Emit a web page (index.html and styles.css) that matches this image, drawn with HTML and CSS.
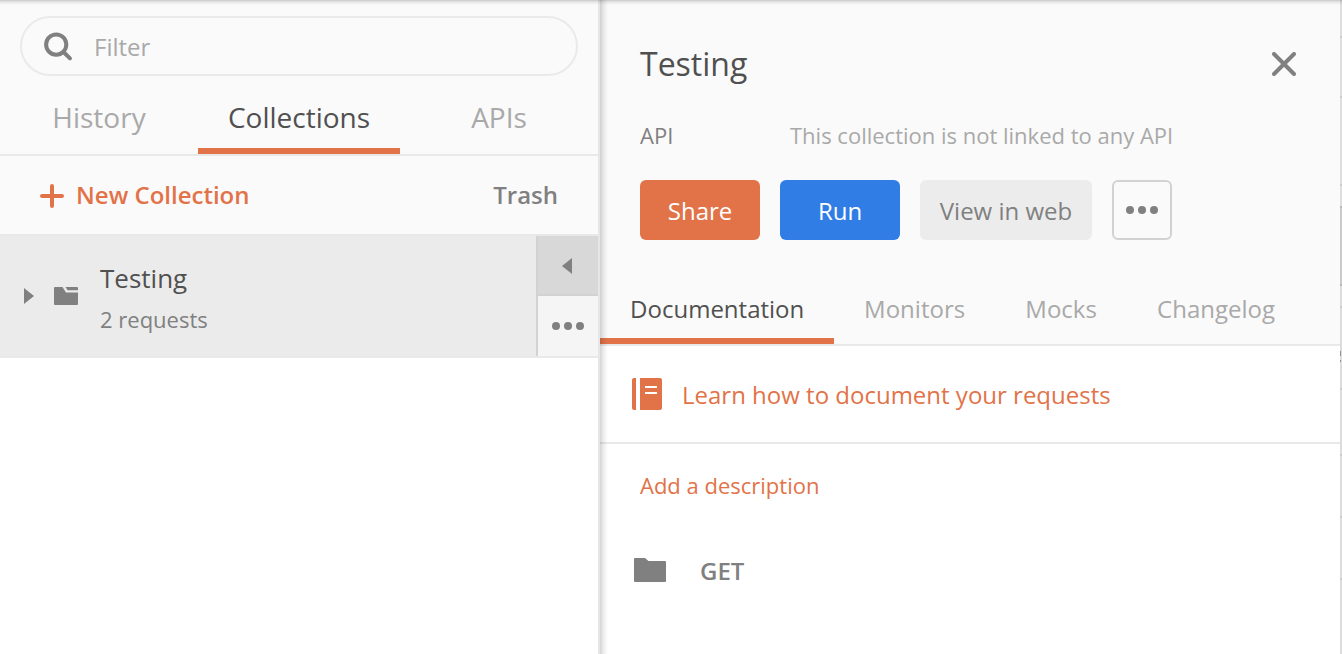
FILE: index.html
```html
<!DOCTYPE html>
<html lang="en">
<head>
<meta charset="utf-8">
<title>Collections</title>
<link rel="stylesheet" href="styles.css">
</head>
<body>
<div class="app">
  <aside class="sidebar">
    <div class="filter">
      <svg class="filter-icon" width="30" height="30" viewBox="0 0 30 30"><circle cx="13.2" cy="12.6" r="10.1"/><path d="M20.7 20.2L27 26.4"/></svg>
      <span>Filter</span>
    </div>
    <nav class="side-tabs">
      <div class="side-tab">History</div>
      <div class="side-tab side-tab-active">Collections</div>
      <div class="side-tab">APIs</div>
    </nav>
    <div class="toolbar">
      <div class="new-collection">
        <svg width="24" height="24" viewBox="0 0 24 24"><path d="M12 2V22M2 12H22"/></svg>
        <span>New Collection</span>
      </div>
      <div class="trash">Trash</div>
    </div>
    <div class="collection">
      <svg class="caret" width="10" height="16" viewBox="0 0 10 16"><path d="M0 0L10 8L0 16Z"/></svg>
      <svg class="collection-icon" width="24" height="18" viewBox="0 0 24 18"><path d="M1 0H8.5L12 5.6H24V17Q24 18 23 18H1Q0 18 0 17V1Q0 0 1 0Z"/><path d="M11.5 0H23Q24 0 24 1V3.2H13.5Z"/></svg>
      <div class="collection-text">
        <div class="collection-name">Testing</div>
        <div class="collection-count">2 requests</div>
      </div>
      <div class="collection-actions">
        <div class="action action-toggle"><svg width="10" height="16" viewBox="0 0 10 16"><path d="M10 0L0 8L10 16Z"/></svg></div>
        <div class="action action-more"><svg width="32" height="8" viewBox="0 0 32 8"><circle cx="4" cy="4" r="4"/><circle cx="16" cy="4" r="4"/><circle cx="28" cy="4" r="4"/></svg></div>
      </div>
    </div>
  </aside>
  <main class="details">
    <header class="details-header">
      <div class="title-row">
        <h1 class="title">Testing</h1>
        <svg class="close" width="24" height="24" viewBox="0 0 24 24"><path d="M2 2L22 22M22 2L2 22"/></svg>
      </div>
      <div class="api-row">
        <span class="api-label">API</span>
        <span class="api-value">This collection is not linked to any API</span>
      </div>
      <div class="buttons">
        <div class="button button-share">Share</div>
        <div class="button button-run">Run</div>
        <div class="button button-web">View in web</div>
        <div class="button button-more"><svg width="32" height="8" viewBox="0 0 32 8"><circle cx="4" cy="4" r="4"/><circle cx="16" cy="4" r="4"/><circle cx="28" cy="4" r="4"/></svg></div>
      </div>
      <nav class="tabs">
        <div class="tab tab-active">Documentation</div>
        <div class="tab">Monitors</div>
        <div class="tab">Mocks</div>
        <div class="tab">Changelog</div>
      </nav>
    </header>
    <div class="learn">
      <svg width="30" height="32" viewBox="0 0 30 32"><path d="M2 0H4V32H2Q0 32 0 30V2Q0 0 2 0Z"/><path fill-rule="evenodd" d="M8 0H28Q30 0 30 2V30Q30 32 28 32H8ZM13 8V10H25V8ZM13 14V16H25V14Z"/></svg>
      <span>Learn how to document your requests</span>
    </div>
    <div class="description">Add a description</div>
    <div class="folder">
      <svg width="32" height="24" viewBox="0 0 32 24"><path d="M1 0H11L14.5 3H31Q32 3 32 4V23Q32 24 31 24H1Q0 24 0 23V1Q0 0 1 0Z"/></svg>
      <span>GET</span>
    </div>
  </main>
  <div class="backdrop">
    <i class="line line-1"></i><i class="line line-2"></i><i class="line line-3"></i><i class="band"></i><i class="line line-4"></i><i class="line line-9"></i><i class="glyph"></i><i class="glyph glyph-low"></i><i class="line line-5"></i><i class="line line-6"></i><i class="line line-7"></i><i class="line line-8"></i>
  </div>
</div>
</body>
</html>
```
FILE: styles.css
```css
* { box-sizing: border-box; }
body { margin: 0; font-family: "Open Sans", "Noto Sans", sans-serif; font-size: 24px; color: #505050; background: #fff; }
svg { display: block; flex: none; fill: #808080; }
.app { position: relative; display: flex; width: 1342px; height: 654px; overflow: hidden; }
.app::after { content: ""; position: absolute; left: 0; right: 0; top: 0; height: 6px; background: linear-gradient(rgba(0,0,0,.2), rgba(0,0,0,.08) 34%, rgba(0,0,0,.02) 67%, transparent); }

.sidebar { width: 600px; flex: none; border-right: 2px solid #e6e6e6; padding-top: 16px; background: linear-gradient(#fafafa 234px, #fff 234px); }
.filter { display: flex; align-items: center; width: 558px; height: 60px; margin-left: 20px; padding: 1px 0 0 21px; border: 2px solid #eaeaea; border-radius: 30px; color: #a9a9a9; }
.filter-icon { margin-right: 21px; fill: none; stroke: #808080; stroke-width: 4; stroke-linecap: round; }
.side-tabs { display: flex; height: 80px; border-bottom: 2px solid #e9e9e9; font-size: 28px; color: #a9a9a9; }
.side-tab { width: 198px; height: 78px; line-height: 82px; text-align: center; }
.side-tab-active { width: 202px; color: #505050; border-bottom: 6px solid #e27349; }
.toolbar { display: flex; justify-content: space-between; align-items: center; height: 78px; padding: 0 40px; line-height: 34px; font-weight: 600; color: #808080; }
.new-collection { display: flex; align-items: center; gap: 12px; color: #e27349; }
.new-collection svg { margin-top: 2px; fill: none; stroke: #e27349; stroke-width: 4; stroke-linecap: round; }
.collection { display: flex; align-items: center; height: 124px; padding-left: 24px; background: #ebebeb; border-top: 2px solid #e8e8e8; border-bottom: 2px solid #e9e9e9; }
.collection-icon { margin: 0 22px 0 20px; }
.collection-text { flex: 1; padding-top: 3px; }
.collection-name { height: 43px; line-height: 45px; font-size: 26px; }
.collection-count { height: 40px; line-height: 40px; font-size: 22px; color: #808080; }
.collection-actions { width: 62px; height: 120px; border-left: 2px solid #d2d2d2; }
.action { display: flex; align-items: center; justify-content: center; height: 60px; }
.action-toggle { background: #d8d8d8; border-bottom: 2px solid #d2d2d2; padding: 2px 2px 0 0; }
.action-more { background: #f5f5f5; }

.details { width: 740px; flex: none; background: #fff; position: relative; }
.details::before { content: ""; position: absolute; left: 0; top: 0; bottom: 0; width: 8px; background: linear-gradient(90deg, rgba(0,0,0,.17), rgba(0,0,0,.07) 45%, transparent); }
.details-header { height: 346px; background: #fafafa; border-bottom: 2px solid #e9e9e9; }
.title-row { display: flex; justify-content: space-between; align-items: center; height: 128px; padding: 0 44px 0 40px; }
.title { margin: 0; font-size: 32px; font-weight: 400; line-height: 44px; }
.close { fill: none; stroke: #808080; stroke-width: 4; stroke-linecap: round; }
.api-row { display: flex; height: 52px; padding-left: 40px; line-height: 14px; font-size: 22px; }
.api-label { width: 150px; color: #808080; }
.api-value { color: #a9a9a9; }
.buttons { display: flex; gap: 20px; height: 60px; padding-left: 40px; }
.button { display: flex; align-items: center; justify-content: center; height: 60px; border-radius: 6px; color: #fff; }
.button-share { width: 120px; background: #e27349; }
.button-run { width: 120px; background: #307de6; }
.button-web { width: 172px; background: #ececec; color: #808080; }
.button-more { width: 60px; border: 2px solid #d2d2d2; }
.tabs { display: flex; height: 104px; color: #a9a9a9; }
.tab { padding: 0 30.1px; line-height: 137px; height: 104px; }
.tab-active { width: 234px; color: #505050; border-bottom: 6px solid #e27349; }
.learn { display: flex; align-items: center; gap: 20px; height: 98px; padding-left: 32px; border-bottom: 2px solid #e9e9e9; color: #e27349; }
.learn svg { fill: #e27349; }
.description { padding-left: 40px; height: 84px; line-height: 82px; font-size: 22px; color: #e27349; }
.folder { display: flex; align-items: center; gap: 34px; height: 84px; padding-left: 34px; font-weight: 600; color: #808080; }

.backdrop { position: relative; width: 2px; flex: none; background: linear-gradient(#dedede 206px, #cacaca 206px 285px, #dcdcdc 285px); }
.line, .band, .glyph { position: absolute; left: 0; width: 2px; height: 2px; background: #cccccc; }
.line-1 { top: 36px; }
.line-2 { top: 96px; }
.line-3 { top: 184px; }
.band { top: 206px; background: #b8b8b8; }
.line-4 { top: 284px; background: #b8b8b8; }
.line-9 { top: 306px; }
.glyph { top: 351px; width: 1px; height: 5px; background: #909090; }
.glyph-low { top: 360px; height: 2px; }
.line-5 { top: 388px; }
.line-6 { top: 454px; }
.line-7 { top: 516px; }
.line-8 { top: 578px; }
```
